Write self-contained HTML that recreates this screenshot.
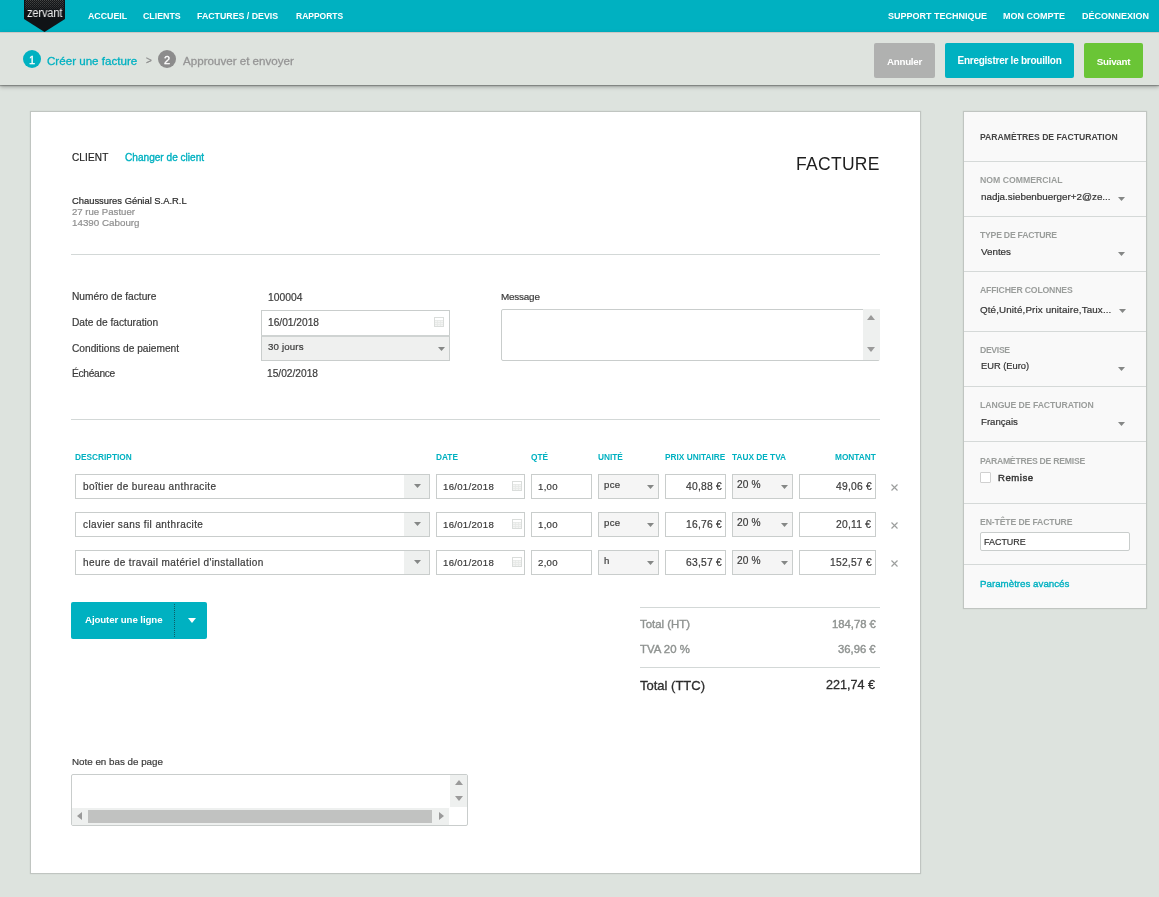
<!DOCTYPE html>
<html><head><meta charset="utf-8"><title>Zervant - Créer une facture</title>
<style>
html,body{margin:0;padding:0;}
body{width:1159px;height:897px;overflow:hidden;position:relative;background:#dde3de;font-family:"Liberation Sans",sans-serif;}
.t{position:absolute;line-height:1;white-space:nowrap;will-change:transform;-webkit-text-stroke:0.2px currentColor;}
.t.b{-webkit-text-stroke:0;}
.r{position:absolute;}
</style></head><body>
<div class="r" style="left:0px;top:0px;width:1159px;height:32px;background:#00b1c1;"></div>
<svg class="r" style="left:24px;top:0;width:41px;height:33px" width="41" height="33" viewBox="0 0 41 33">
<defs><pattern id="dith" width="2" height="2" patternUnits="userSpaceOnUse"><rect width="2" height="2" fill="#151719"/><rect width="1" height="1" fill="#4a4a4a"/><rect x="1" y="1" width="1" height="1" fill="#3a3a3a"/></pattern>
<linearGradient id="fade" x1="0" y1="0" x2="0" y2="1"><stop offset="0" stop-color="#fff" stop-opacity="1"/><stop offset="0.7" stop-color="#fff" stop-opacity="0.6"/><stop offset="1" stop-color="#fff" stop-opacity="0"/></linearGradient>
<mask id="fm"><rect width="41" height="11" fill="url(#fade)"/></mask></defs>
<polygon points="0,0 41,0 41,19 20.5,32 0,19" fill="#101316"/>
<rect x="1" y="0" width="39" height="11" fill="url(#dith)" mask="url(#fm)"/>
</svg>
<div class="t" style="left:27.2px;top:6.64px;font-size:12px;color:#f0f0f0;letter-spacing:-0.2px;transform:scaleX(0.93);transform-origin:0 0;-webkit-text-stroke:0;">zervant</div>
<div class="t b" style="left:87.5px;top:11.75px;font-size:8.8px;color:#ffffff;font-weight:bold;">ACCUEIL</div>
<div class="t b" style="left:142.5px;top:11.75px;font-size:8.8px;color:#ffffff;font-weight:bold;">CLIENTS</div>
<div class="t b" style="left:197.0px;top:11.75px;font-size:8.8px;color:#ffffff;font-weight:bold;">FACTURES / DEVIS</div>
<div class="t b" style="left:295.5px;top:12.00px;font-size:8.5px;color:#ffffff;font-weight:bold;">RAPPORTS</div>
<div class="t b" style="left:887.5px;top:11.58px;font-size:9px;color:#ffffff;font-weight:bold;">SUPPORT TECHNIQUE</div>
<div class="t b" style="left:1003.0px;top:11.58px;font-size:9px;color:#ffffff;font-weight:bold;">MON COMPTE</div>
<div class="t b" style="left:1082.0px;top:11.58px;font-size:9px;color:#ffffff;font-weight:bold;">DÉCONNEXION</div>
<div class="r" style="left:0px;top:32px;width:1159px;height:53px;background:#dee3de;box-shadow:0 1px 1px rgba(0,0,0,0.25), 0 2px 4px rgba(0,0,0,0.28);z-index:1;"></div>
<div class="r" style="left:0px;top:32px;width:1159px;height:1px;background:#cdc7c5;z-index:2;"></div>
<div class="r" style="left:23px;top:50px;width:18px;height:18px;background:#00b1c1;border-radius:50%;z-index:2;"></div>
<div class="t" style="left:23.0px;width:18px;top:54.69px;font-size:11px;color:#ffffff;text-align:center;z-index:3;-webkit-text-stroke:0.3px #fff;">1</div>
<div class="t" style="left:47px;top:54.68px;font-size:11.6px;color:#00b1c1;z-index:3;-webkit-text-stroke:0.3px #00b1c1;">Créer une facture</div>
<div class="t" style="left:145.5px;top:55.53px;font-size:10px;color:#8a8a8a;z-index:3;">&gt;</div>
<div class="r" style="left:158px;top:50px;width:18px;height:18px;background:#8c8c8c;border-radius:50%;z-index:2;"></div>
<div class="t" style="left:158.0px;width:18px;top:54.69px;font-size:11px;color:#ffffff;text-align:center;z-index:3;-webkit-text-stroke:0.3px #fff;">2</div>
<div class="t" style="left:183px;top:54.68px;font-size:11.6px;color:#959595;z-index:3;-webkit-text-stroke:0.3px #959595;">Approuver et envoyer</div>
<div class="r" style="left:874px;top:43px;width:61px;height:35px;background:#b0b1b0;border-radius:2px;z-index:2;"></div>
<div class="t b" style="left:874.0px;width:61px;top:56.90px;font-size:9.8px;color:#fff;text-align:center;font-weight:bold;letter-spacing:-0.3px;z-index:3;">Annuler</div>
<div class="r" style="left:945px;top:43px;width:129px;height:35px;background:#00b1c1;border-radius:2px;z-index:2;"></div>
<div class="t b" style="left:945.0px;width:129px;top:56.33px;font-size:10px;color:#fff;text-align:center;font-weight:bold;letter-spacing:-0.25px;z-index:3;">Enregistrer le brouillon</div>
<div class="r" style="left:1084px;top:43px;width:59px;height:35px;background:#6ac536;border-radius:2px;z-index:2;"></div>
<div class="t b" style="left:1084.0px;width:59px;top:56.50px;font-size:9.8px;color:#fff;text-align:center;font-weight:bold;letter-spacing:-0.25px;z-index:3;">Suivant</div>
<div class="r" style="left:31px;top:112px;width:889px;height:761px;background:#fff;box-shadow:0 0 1px 1px rgba(0,0,0,0.13);"></div>
<div class="t" style="left:72px;top:153.13px;font-size:10px;color:#222;letter-spacing:0.15px;">CLIENT</div>
<div class="t" style="left:125px;top:153.05px;font-size:10.1px;color:#00b1c1;-webkit-text-stroke:0.35px #00b1c1;">Changer de client</div>
<div class="t" style="right:279.5px;top:155.79px;font-size:17.5px;color:#1e1e1e;text-align:right;letter-spacing:0.3px;-webkit-text-stroke:0;">FACTURE</div>
<div class="t" style="left:72px;top:196.04px;font-size:9.4px;color:#2a2a2a;">Chaussures Génial S.A.R.L</div>
<div class="t" style="left:72px;top:206.87px;font-size:9.6px;color:#8f8f8f;">27 rue Pastuer</div>
<div class="t" style="left:72px;top:217.70px;font-size:9.8px;color:#8f8f8f;">14390 Cabourg</div>
<div class="r" style="left:71px;top:254px;width:809px;height:1px;background:#d3d8d7;"></div>
<div class="t" style="left:72px;top:292.37px;font-size:10.2px;color:#3b3b3b;">Numéro de facture</div>
<div class="t" style="left:72px;top:318.17px;font-size:10.2px;color:#3b3b3b;">Date de facturation</div>
<div class="t" style="left:72px;top:344.37px;font-size:10.2px;color:#3b3b3b;">Conditions de paiement</div>
<div class="t" style="left:72px;top:368.67px;font-size:10.2px;color:#3b3b3b;letter-spacing:-0.3px;">Échéance</div>
<div class="t" style="left:267.5px;top:293.28px;font-size:10.3px;color:#3b3b3b;">100004</div>
<div class="r" style="left:261px;top:310px;width:189px;height:26px;background:#fff;box-sizing:border-box;border:1px solid #c9cdcc;"></div>
<div class="t" style="left:267.5px;top:318.17px;font-size:10.2px;color:#3b3b3b;">16/01/2018</div>
<svg class="r" style="left:434px;top:317px" width="10" height="10" viewBox="0 0 10 10"><rect x="0.5" y="0.5" width="9" height="9" fill="#f3f4f3" stroke="#dadddb"/><rect x="1" y="1" width="8" height="2" fill="#ffffff"/><path d="M1,3.5H9M1,5.5H9M1,7.5H9M3.5,3V9M6.5,3V9" stroke="#e6e8e6" stroke-width="0.8"/></svg>
<div class="r" style="left:261px;top:335px;width:189px;height:26px;background:#eff0ef;box-sizing:border-box;border:1px solid #c9cdcc;border-top:2px solid #cfd3d2;"></div>
<div class="t" style="left:267.5px;top:342.39px;font-size:9.7px;color:#3b3b3b;letter-spacing:0.15px;">30 jours</div>
<svg class="r" style="left:437.5px;top:347px" width="7" height="4"><polygon points="0,0 7,0 3.5,4" fill="#858786"/></svg>
<div class="t" style="left:267px;top:368.87px;font-size:10.2px;color:#3b3b3b;">15/02/2018</div>
<div class="t" style="left:501px;top:291.92px;font-size:9.9px;color:#3b3b3b;letter-spacing:-0.2px;">Message</div>
<div class="r" style="left:501px;top:309px;width:379px;height:52px;background:#fff;box-sizing:border-box;border:1px solid #c9cdcc;border-radius:2px;"></div>
<div class="r" style="left:863px;top:309px;width:17px;height:51px;background:#eef0ef;"></div>
<svg class="r" style="left:867px;top:315px" width="8" height="5"><polygon points="4,0 8,5 0,5" fill="#9a9a9a"/></svg>
<svg class="r" style="left:867px;top:347px" width="8" height="5"><polygon points="0,0 8,0 4,5" fill="#9a9a9a"/></svg>
<div class="r" style="left:71px;top:419px;width:809px;height:1px;background:#d3d8d7;"></div>
<div class="t b" style="left:75px;top:452.97px;font-size:8.3px;color:#00b1c1;font-weight:bold;">DESCRIPTION</div>
<div class="t b" style="left:436px;top:452.97px;font-size:8.3px;color:#00b1c1;font-weight:bold;">DATE</div>
<div class="t b" style="left:531px;top:452.97px;font-size:8.3px;color:#00b1c1;font-weight:bold;">QTÉ</div>
<div class="t b" style="left:598px;top:452.97px;font-size:8.3px;color:#00b1c1;font-weight:bold;">UNITÉ</div>
<div class="t b" style="left:665px;top:452.97px;font-size:8.3px;color:#00b1c1;font-weight:bold;">PRIX UNITAIRE</div>
<div class="t b" style="left:732px;top:452.97px;font-size:8.3px;color:#00b1c1;font-weight:bold;">TAUX DE TVA</div>
<div class="t b" style="right:283px;top:452.97px;font-size:8.3px;color:#00b1c1;text-align:right;font-weight:bold;">MONTANT</div>
<div class="r" style="left:75px;top:474px;width:355px;height:25px;background:#fff;box-sizing:border-box;border:1px solid #c9cdcc;"></div>
<div class="r" style="left:404px;top:475px;width:25px;height:23px;background:#eef0ef;"></div>
<svg class="r" style="left:413.5px;top:484px" width="7" height="4"><polygon points="0,0 7,0 3.5,4" fill="#858786"/></svg>
<div class="t" style="left:82.5px;top:481.54px;font-size:10px;color:#3b3b3b;letter-spacing:0.4px;">boîtier de bureau anthracite</div>
<div class="r" style="left:436px;top:474px;width:89px;height:25px;background:#fff;box-sizing:border-box;border:1px solid #c9cdcc;"></div>
<div class="t" style="left:442.8px;top:482.47px;font-size:9.6px;color:#3b3b3b;letter-spacing:0.3px;">16/01/2018</div>
<svg class="r" style="left:512px;top:481px" width="10" height="10" viewBox="0 0 10 10"><rect x="0.5" y="0.5" width="9" height="9" fill="#f3f4f3" stroke="#dadddb"/><rect x="1" y="1" width="8" height="2" fill="#ffffff"/><path d="M1,3.5H9M1,5.5H9M1,7.5H9M3.5,3V9M6.5,3V9" stroke="#e6e8e6" stroke-width="0.8"/></svg>
<div class="r" style="left:531px;top:474px;width:61px;height:25px;background:#fff;box-sizing:border-box;border:1px solid #c9cdcc;"></div>
<div class="t" style="left:538px;top:482.47px;font-size:9.6px;color:#3b3b3b;letter-spacing:0.3px;">1,00</div>
<div class="r" style="left:598px;top:474px;width:61px;height:25px;background:#f5f5f5;box-sizing:border-box;border:1px solid #c9cdcc;"></div>
<div class="t" style="left:603.6px;top:480.47px;font-size:9.6px;color:#3b3b3b;letter-spacing:0.3px;">pce</div>
<svg class="r" style="left:646.5px;top:485px" width="7" height="4"><polygon points="0,0 7,0 3.5,4" fill="#858786"/></svg>
<div class="r" style="left:665px;top:474px;width:61px;height:25px;background:#fff;box-sizing:border-box;border:1px solid #c9cdcc;"></div>
<div class="t" style="right:437.4px;top:481.58px;font-size:10.3px;color:#3b3b3b;text-align:right;letter-spacing:0.22px;">40,88 €</div>
<div class="r" style="left:732px;top:474px;width:61px;height:25px;background:#f5f5f5;box-sizing:border-box;border:1px solid #c9cdcc;"></div>
<div class="t" style="left:737.4px;top:479.77px;font-size:10.2px;color:#3b3b3b;letter-spacing:0.1px;">20 %</div>
<svg class="r" style="left:780.5px;top:485px" width="7" height="4"><polygon points="0,0 7,0 3.5,4" fill="#858786"/></svg>
<div class="r" style="left:799px;top:474px;width:77px;height:25px;background:#fff;box-sizing:border-box;border:1px solid #c9cdcc;"></div>
<div class="t" style="right:287.4px;top:481.58px;font-size:10.3px;color:#3b3b3b;text-align:right;letter-spacing:0.22px;">49,06 €</div>
<svg class="r" style="left:891px;top:484px" width="7" height="7"><path d="M0.5,0.5 L6.5,6.5 M6.5,0.5 L0.5,6.5" stroke="#9c9e9d" stroke-width="1.15"/></svg>
<div class="r" style="left:75px;top:512px;width:355px;height:25px;background:#fff;box-sizing:border-box;border:1px solid #c9cdcc;"></div>
<div class="r" style="left:404px;top:513px;width:25px;height:23px;background:#eef0ef;"></div>
<svg class="r" style="left:413.5px;top:522px" width="7" height="4"><polygon points="0,0 7,0 3.5,4" fill="#858786"/></svg>
<div class="t" style="left:82.5px;top:519.53px;font-size:10px;color:#3b3b3b;letter-spacing:0.4px;">clavier sans fil anthracite</div>
<div class="r" style="left:436px;top:512px;width:89px;height:25px;background:#fff;box-sizing:border-box;border:1px solid #c9cdcc;"></div>
<div class="t" style="left:442.8px;top:520.47px;font-size:9.6px;color:#3b3b3b;letter-spacing:0.3px;">16/01/2018</div>
<svg class="r" style="left:512px;top:519px" width="10" height="10" viewBox="0 0 10 10"><rect x="0.5" y="0.5" width="9" height="9" fill="#f3f4f3" stroke="#dadddb"/><rect x="1" y="1" width="8" height="2" fill="#ffffff"/><path d="M1,3.5H9M1,5.5H9M1,7.5H9M3.5,3V9M6.5,3V9" stroke="#e6e8e6" stroke-width="0.8"/></svg>
<div class="r" style="left:531px;top:512px;width:61px;height:25px;background:#fff;box-sizing:border-box;border:1px solid #c9cdcc;"></div>
<div class="t" style="left:538px;top:520.47px;font-size:9.6px;color:#3b3b3b;letter-spacing:0.3px;">1,00</div>
<div class="r" style="left:598px;top:512px;width:61px;height:25px;background:#f5f5f5;box-sizing:border-box;border:1px solid #c9cdcc;"></div>
<div class="t" style="left:603.6px;top:518.47px;font-size:9.6px;color:#3b3b3b;letter-spacing:0.3px;">pce</div>
<svg class="r" style="left:646.5px;top:523px" width="7" height="4"><polygon points="0,0 7,0 3.5,4" fill="#858786"/></svg>
<div class="r" style="left:665px;top:512px;width:61px;height:25px;background:#fff;box-sizing:border-box;border:1px solid #c9cdcc;"></div>
<div class="t" style="right:437.4px;top:519.58px;font-size:10.3px;color:#3b3b3b;text-align:right;letter-spacing:0.22px;">16,76 €</div>
<div class="r" style="left:732px;top:512px;width:61px;height:25px;background:#f5f5f5;box-sizing:border-box;border:1px solid #c9cdcc;"></div>
<div class="t" style="left:737.4px;top:517.77px;font-size:10.2px;color:#3b3b3b;letter-spacing:0.1px;">20 %</div>
<svg class="r" style="left:780.5px;top:523px" width="7" height="4"><polygon points="0,0 7,0 3.5,4" fill="#858786"/></svg>
<div class="r" style="left:799px;top:512px;width:77px;height:25px;background:#fff;box-sizing:border-box;border:1px solid #c9cdcc;"></div>
<div class="t" style="right:287.4px;top:519.58px;font-size:10.3px;color:#3b3b3b;text-align:right;letter-spacing:0.22px;">20,11 €</div>
<svg class="r" style="left:891px;top:522px" width="7" height="7"><path d="M0.5,0.5 L6.5,6.5 M6.5,0.5 L0.5,6.5" stroke="#9c9e9d" stroke-width="1.15"/></svg>
<div class="r" style="left:75px;top:550px;width:355px;height:25px;background:#fff;box-sizing:border-box;border:1px solid #c9cdcc;"></div>
<div class="r" style="left:404px;top:551px;width:25px;height:23px;background:#eef0ef;"></div>
<svg class="r" style="left:413.5px;top:560px" width="7" height="4"><polygon points="0,0 7,0 3.5,4" fill="#858786"/></svg>
<div class="t" style="left:82.5px;top:557.53px;font-size:10px;color:#3b3b3b;letter-spacing:0.4px;">heure de travail matériel d'installation</div>
<div class="r" style="left:436px;top:550px;width:89px;height:25px;background:#fff;box-sizing:border-box;border:1px solid #c9cdcc;"></div>
<div class="t" style="left:442.8px;top:558.47px;font-size:9.6px;color:#3b3b3b;letter-spacing:0.3px;">16/01/2018</div>
<svg class="r" style="left:512px;top:557px" width="10" height="10" viewBox="0 0 10 10"><rect x="0.5" y="0.5" width="9" height="9" fill="#f3f4f3" stroke="#dadddb"/><rect x="1" y="1" width="8" height="2" fill="#ffffff"/><path d="M1,3.5H9M1,5.5H9M1,7.5H9M3.5,3V9M6.5,3V9" stroke="#e6e8e6" stroke-width="0.8"/></svg>
<div class="r" style="left:531px;top:550px;width:61px;height:25px;background:#fff;box-sizing:border-box;border:1px solid #c9cdcc;"></div>
<div class="t" style="left:538px;top:558.47px;font-size:9.6px;color:#3b3b3b;letter-spacing:0.3px;">2,00</div>
<div class="r" style="left:598px;top:550px;width:61px;height:25px;background:#f5f5f5;box-sizing:border-box;border:1px solid #c9cdcc;"></div>
<div class="t" style="left:603.6px;top:556.47px;font-size:9.6px;color:#3b3b3b;letter-spacing:0.3px;">h</div>
<svg class="r" style="left:646.5px;top:561px" width="7" height="4"><polygon points="0,0 7,0 3.5,4" fill="#858786"/></svg>
<div class="r" style="left:665px;top:550px;width:61px;height:25px;background:#fff;box-sizing:border-box;border:1px solid #c9cdcc;"></div>
<div class="t" style="right:437.4px;top:557.58px;font-size:10.3px;color:#3b3b3b;text-align:right;letter-spacing:0.22px;">63,57 €</div>
<div class="r" style="left:732px;top:550px;width:61px;height:25px;background:#f5f5f5;box-sizing:border-box;border:1px solid #c9cdcc;"></div>
<div class="t" style="left:737.4px;top:555.77px;font-size:10.2px;color:#3b3b3b;letter-spacing:0.1px;">20 %</div>
<svg class="r" style="left:780.5px;top:561px" width="7" height="4"><polygon points="0,0 7,0 3.5,4" fill="#858786"/></svg>
<div class="r" style="left:799px;top:550px;width:77px;height:25px;background:#fff;box-sizing:border-box;border:1px solid #c9cdcc;"></div>
<div class="t" style="right:287.4px;top:557.58px;font-size:10.3px;color:#3b3b3b;text-align:right;letter-spacing:0.22px;">152,57 €</div>
<svg class="r" style="left:891px;top:560px" width="7" height="7"><path d="M0.5,0.5 L6.5,6.5 M6.5,0.5 L0.5,6.5" stroke="#9c9e9d" stroke-width="1.15"/></svg>
<div class="r" style="left:71px;top:602px;width:136px;height:37px;background:#00b1c1;border-radius:2px;"></div>
<div class="r" style="left:174px;top:604px;width:0;height:33px;border-left:1px dotted #0b5d66;"></div>
<div class="t b" style="left:84.5px;top:615.39px;font-size:9.7px;color:#fff;font-weight:bold;letter-spacing:-0.1px;">Ajouter une ligne</div>
<svg class="r" style="left:187.5px;top:618px" width="8" height="5"><polygon points="0,0 8,0 4.0,5" fill="#ffffff"/></svg>
<div class="r" style="left:640px;top:607px;width:240px;height:1px;background:#d3d8d7;"></div>
<div class="t" style="left:640px;top:619.15px;font-size:11.4px;color:#8f9391;-webkit-text-stroke:0.4px #8f9391;">Total (HT)</div>
<div class="t" style="right:283.5px;top:619.28px;font-size:11.25px;color:#8f9391;text-align:right;-webkit-text-stroke:0.4px #8f9391;">184,78 €</div>
<div class="t" style="left:640px;top:643.95px;font-size:11.4px;color:#8f9391;-webkit-text-stroke:0.4px #8f9391;">TVA 20 %</div>
<div class="t" style="right:283.5px;top:644.08px;font-size:11.25px;color:#8f9391;text-align:right;-webkit-text-stroke:0.4px #8f9391;">36,96 €</div>
<div class="r" style="left:640px;top:667px;width:240px;height:1px;background:#d3d8d7;"></div>
<div class="t" style="left:640px;top:679.00px;font-size:13px;color:#2d2d2d;-webkit-text-stroke:0.3px #2d2d2d;">Total (TTC)</div>
<div class="t" style="right:283.5px;top:679.33px;font-size:12.6px;color:#2d2d2d;text-align:right;-webkit-text-stroke:0.3px #2d2d2d;">221,74 €</div>
<div class="t" style="left:72px;top:757.00px;font-size:9.8px;color:#3b3b3b;">Note en bas de page</div>
<div class="r" style="left:71px;top:774px;width:397px;height:52px;background:#fff;box-sizing:border-box;border:1px solid #c9cdcc;border-radius:2px;"></div>
<div class="r" style="left:450px;top:775px;width:17px;height:32px;background:#eef0ef;"></div>
<svg class="r" style="left:455px;top:780px" width="8" height="5"><polygon points="4,0 8,5 0,5" fill="#9a9a9a"/></svg>
<svg class="r" style="left:455px;top:796px" width="8" height="5"><polygon points="0,0 8,0 4,5" fill="#9a9a9a"/></svg>
<div class="r" style="left:72px;top:808px;width:377px;height:17px;background:#eef0ef;"></div>
<div class="r" style="left:88px;top:810px;width:344px;height:13px;background:#c1c2c1;"></div>
<svg class="r" style="left:77px;top:812px" width="5" height="8"><polygon points="5,0 5,8 0,4" fill="#9a9a9a"/></svg>
<svg class="r" style="left:439px;top:812px" width="5" height="8"><polygon points="0,0 5,4 0,8" fill="#9a9a9a"/></svg>
<div class="r" style="left:964px;top:112px;width:182px;height:496px;background:#f9f9f9;box-shadow:0 0 1px 1px rgba(0,0,0,0.13);"></div>
<div class="t b" style="left:980px;top:133.18px;font-size:8.65px;color:#444;font-weight:bold;">PARAMÈTRES DE FACTURATION</div>
<div class="r" style="left:964px;top:161px;width:182px;height:1px;background:#d5d9d8;"></div>
<div class="r" style="left:964px;top:216px;width:182px;height:1px;background:#d5d9d8;"></div>
<div class="r" style="left:964px;top:271px;width:182px;height:1px;background:#d5d9d8;"></div>
<div class="r" style="left:964px;top:331px;width:182px;height:1px;background:#d5d9d8;"></div>
<div class="r" style="left:964px;top:386px;width:182px;height:1px;background:#d5d9d8;"></div>
<div class="r" style="left:964px;top:441px;width:182px;height:1px;background:#d5d9d8;"></div>
<div class="r" style="left:964px;top:503px;width:182px;height:1px;background:#d5d9d8;"></div>
<div class="r" style="left:964px;top:564px;width:182px;height:1px;background:#d5d9d8;"></div>
<div class="t b" style="left:980px;top:175.84px;font-size:8.7px;color:#9a9d9b;font-weight:bold;">NOM COMMERCIAL</div>
<div class="t" style="left:981px;top:192.16px;font-size:9.85px;color:#333;">nadja.siebenbuerger+2@ze...</div>
<svg class="r" style="left:1118.0px;top:197px" width="7" height="4"><polygon points="0,0 7,0 3.5,4" fill="#858786"/></svg>
<div class="t b" style="left:980px;top:230.84px;font-size:8.7px;color:#9a9d9b;font-weight:bold;letter-spacing:-0.25px;">TYPE DE FACTURE</div>
<div class="t" style="left:981px;top:246.70px;font-size:9.8px;color:#333;">Ventes</div>
<svg class="r" style="left:1118.0px;top:251.5px" width="7" height="4"><polygon points="0,0 7,0 3.5,4" fill="#858786"/></svg>
<div class="t b" style="left:980px;top:285.84px;font-size:8.7px;color:#9a9d9b;font-weight:bold;letter-spacing:-0.18px;">AFFICHER COLONNES</div>
<div class="t" style="left:980px;top:305.30px;font-size:9.8px;color:#333;letter-spacing:0.13px;">Qté,Unité,Prix unitaire,Taux...</div>
<svg class="r" style="left:1118.5px;top:309px" width="7" height="4"><polygon points="0,0 7,0 3.5,4" fill="#858786"/></svg>
<div class="t b" style="left:980px;top:345.94px;font-size:8.7px;color:#9a9d9b;font-weight:bold;letter-spacing:-0.35px;">DEVISE</div>
<div class="t" style="left:981px;top:362.13px;font-size:9.3px;color:#333;">EUR (Euro)</div>
<svg class="r" style="left:1118.0px;top:366.5px" width="7" height="4"><polygon points="0,0 7,0 3.5,4" fill="#858786"/></svg>
<div class="t b" style="left:980px;top:400.94px;font-size:8.7px;color:#9a9d9b;font-weight:bold;letter-spacing:-0.07px;">LANGUE DE FACTURATION</div>
<div class="t" style="left:981px;top:417.13px;font-size:9.65px;color:#333;">Français</div>
<svg class="r" style="left:1118.0px;top:421.5px" width="7" height="4"><polygon points="0,0 7,0 3.5,4" fill="#858786"/></svg>
<div class="t b" style="left:980px;top:456.94px;font-size:8.7px;color:#9a9d9b;font-weight:bold;letter-spacing:-0.27px;">PARAMÈTRES DE REMISE</div>
<div class="r" style="left:980px;top:472px;width:11px;height:11px;background:#fff;box-sizing:border-box;border:1px solid #d0d0d0;border-radius:1px;"></div>
<div class="t" style="left:997.5px;top:473.17px;font-size:9.6px;color:#333;letter-spacing:0.5px;-webkit-text-stroke:0.4px #333;">Remise</div>
<div class="t b" style="left:980px;top:517.94px;font-size:8.7px;color:#9a9d9b;font-weight:bold;letter-spacing:-0.15px;">EN-TÊTE DE FACTURE</div>
<div class="r" style="left:980px;top:532px;width:150px;height:19px;background:#fff;box-sizing:border-box;border:1px solid #c9cdcc;border-radius:2px;"></div>
<div class="t" style="left:984px;top:537.72px;font-size:8.95px;color:#333;">FACTURE</div>
<div class="t" style="left:980px;top:578.75px;font-size:9.75px;color:#00b1c1;-webkit-text-stroke:0.35px #00b1c1;">Paramètres avancés</div>
</body></html>
